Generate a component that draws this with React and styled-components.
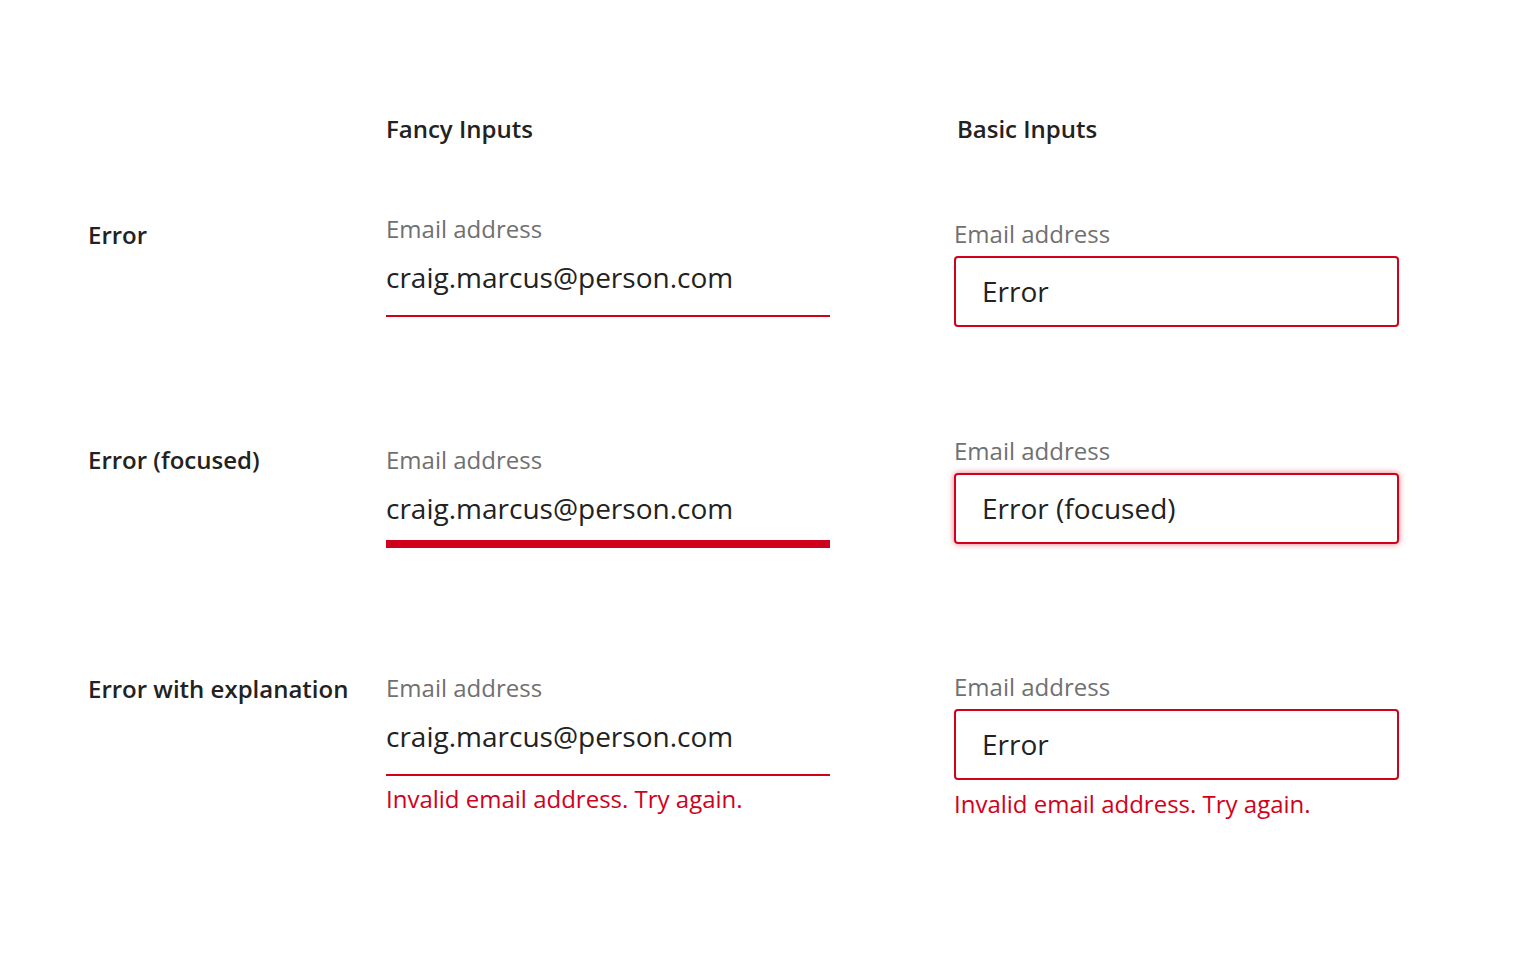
import React from 'react';
import styled, { createGlobalStyle } from 'styled-components';

const GlobalStyle = createGlobalStyle`
  body {
    margin: 0;
    background: #fff;
    font-family: "Open Sans", "Noto Sans", sans-serif;
    color: #222;
  }
`;

const RED = '#d0021b';

const Page = styled.div`
  padding: 113px 0 120px 88px;
  display: flex;
  flex-direction: column;
`;

const Row = styled.div`
  display: grid;
  grid-template-columns: 298px 568px 445px;
  align-items: start;
  margin-top: ${(p) => p.$top || 0}px;
`;

const Heading = styled.div`
  font: 600 24px/32px "Open Sans", sans-serif;
  color: #222;
  padding-left: ${(p) => p.$shift || 0}px;
`;

const RowLabel = styled.div`
  font: 600 24px/32px "Open Sans", sans-serif;
  color: #222;
  padding-top: ${(p) => p.$offset || 0}px;
`;

const Field = styled.div`
  width: ${(p) => p.$width || 444}px;
  display: flex;
  flex-direction: column;
  padding-top: ${(p) => p.$offset || 0}px;
`;

const Label = styled.label`
  font: 400 24px/32px "Open Sans", sans-serif;
  color: #707070;
`;

const FancyValue = styled.div`
  box-sizing: border-box;
  margin-top: 12px;
  height: 60px;
  font: 400 28px/40px "Open Sans", sans-serif;
  color: #222;
  border-bottom: ${(p) => (p.$focused ? 8 : 2)}px solid ${RED};
`;

const BasicBox = styled.div`
  box-sizing: border-box;
  margin-top: 6px;
  height: 71px;
  padding-left: 26px;
  border: 2px solid ${RED};
  border-radius: 4px;
  font: 400 28px/66px "Open Sans", sans-serif;
  color: #222;
  box-shadow: ${(p) => (p.$focused ? `0 0 6px rgba(208, 2, 27, 0.55)` : 'none')};
`;

const ErrorText = styled.div`
  margin-top: ${(p) => p.$gap || 7}px;
  font: 400 24px/32px "Open Sans", sans-serif;
  color: ${RED};
`;

const EMAIL = 'craig.marcus@person.com';
const MESSAGE = 'Invalid email address. Try again.';

const rows = [
  { title: 'Error', top: 68, offsets: [6, 0, 5], basic: 'Error' },
  { title: 'Error (focused)', top: 108, offsets: [9, 9, 0], basic: 'Error (focused)', focused: true },
  { title: 'Error with explanation', top: 123, offsets: [2, 1, 0], basic: 'Error', explain: true },
];

export default function App() {
  return (
    <>
      <GlobalStyle />
      <Page>
        <Row>
          <div />
          <Heading>Fancy Inputs</Heading>
          <Heading $shift={3}>Basic Inputs</Heading>
        </Row>
        {rows.map((row) => (
          <Row key={row.title} $top={row.top}>
            <RowLabel $offset={row.offsets[0]}>{row.title}</RowLabel>
            <Field $offset={row.offsets[1]}>
              <Label>Email address</Label>
              <FancyValue $focused={row.focused}>{EMAIL}</FancyValue>
              {row.explain && <ErrorText>{MESSAGE}</ErrorText>}
            </Field>
            <Field $offset={row.offsets[2]} $width={445}>
              <Label>Email address</Label>
              <BasicBox $focused={row.focused}>{row.basic}</BasicBox>
              {row.explain && <ErrorText $gap={8}>{MESSAGE}</ErrorText>}
            </Field>
          </Row>
        ))}
      </Page>
    </>
  );
}
